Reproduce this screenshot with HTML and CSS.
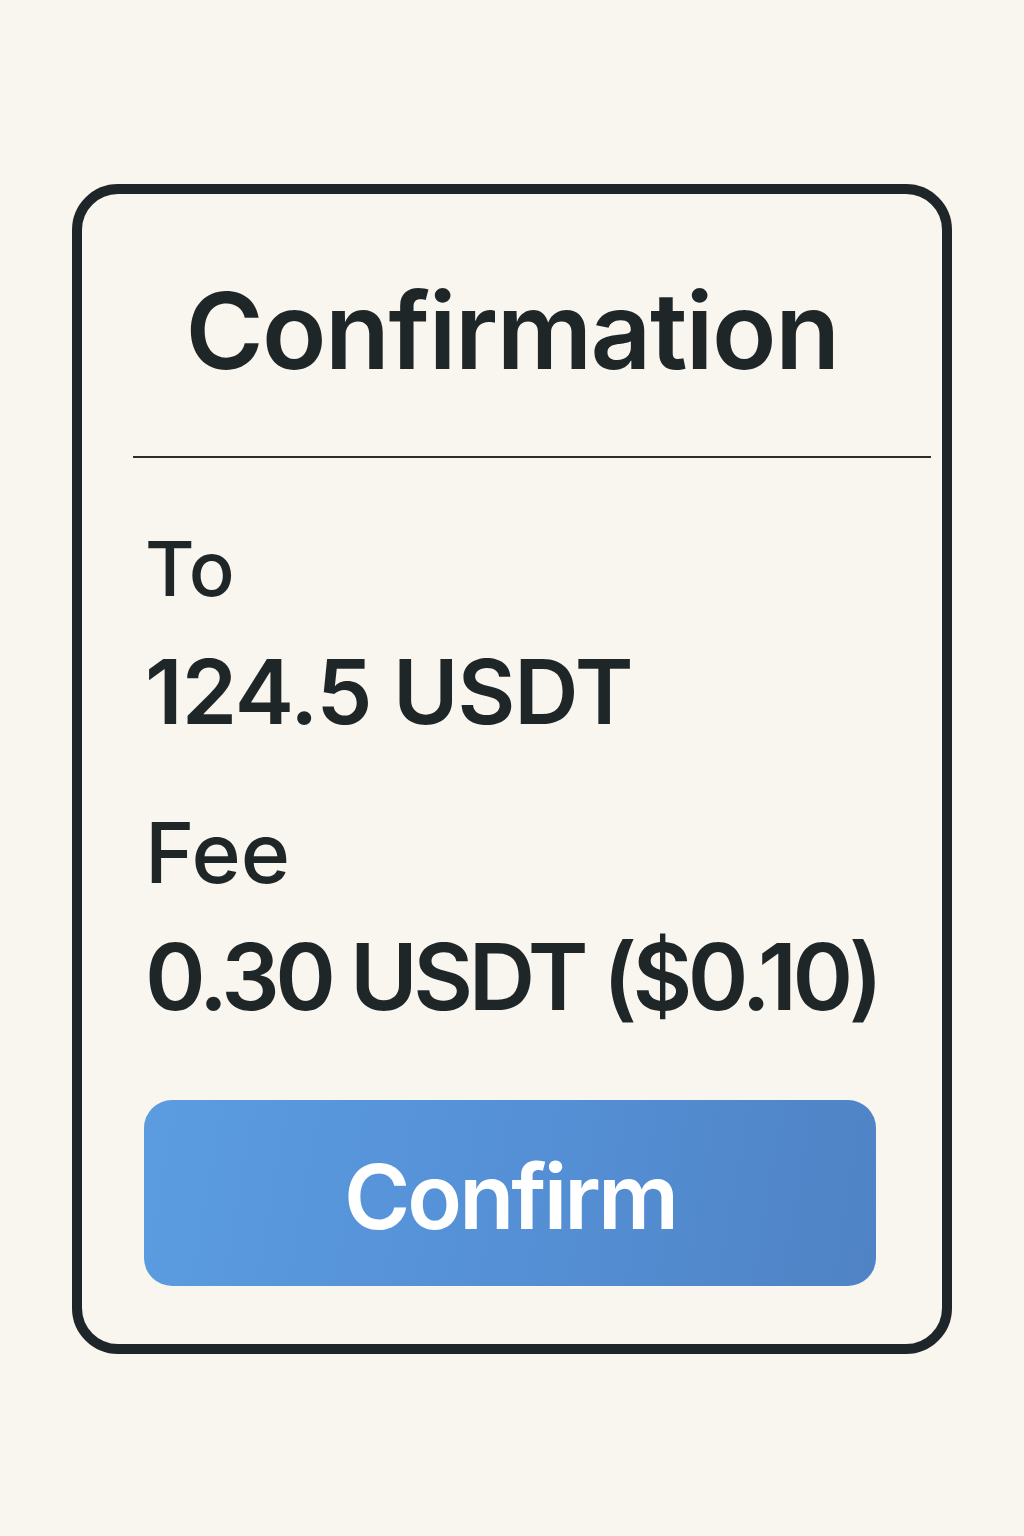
FILE: index.html
```html
<!DOCTYPE html>
<html lang="en">
<head>
    <meta charset="UTF-8">
    <meta name="viewport" content="width=device-width, initial-scale=1.0">
    <title>Confirmation</title>
    <link rel="stylesheet" href="styles.css">
</head>
<body>
    <div class="card">
        <h1 class="title">Confirmation</h1>
        <div class="divider"></div>
        <div class="details">
            <p class="label label-to">To</p>
            <p class="value value-amount">124.5 USDT</p>
            <p class="label label-fee">Fee</p>
            <p class="value value-fee">0.30 USDT ($0.10)</p>
        </div>
        <button class="confirm-btn">Confirm</button>
    </div>
</body>
</html>
```

FILE: styles.css
```css
body {
    margin: 0;
    background-color: #f9f6f0;
    font-family: 'Inter', 'Noto Sans', sans-serif;
    color: #1e2628;
}
.card {
    box-sizing: border-box;
    width: 880px;
    margin: 184px auto 0;
    padding: 84px 0 58px;
    border: 10px solid #1e2629;
    border-radius: 46px;
}
.title {
    margin: 0;
    font-size: 106px;
    line-height: 1;
    font-weight: 600;
    text-align: center;
    letter-spacing: -1.5px;
}
.divider {
    height: 2px;
    margin: 72px 11px 0 51px;
    background-color: #2a2e2c;
}
.details {
    padding-left: 63px;
}
.label, .value {
    margin: 0;
    line-height: 1;
    white-space: nowrap;
}
.label {
    font-weight: 500;
}
.value {
    font-weight: 600;
}
.label-to {
    margin-top: 72px;
    font-size: 76px;
}
.value-amount {
    margin-top: 41px;
    font-size: 89px;
    letter-spacing: -1px;
}
.label-fee {
    margin-top: 75px;
    font-size: 84px;
}
.value-fee {
    margin-top: 36px;
    font-size: 92px;
    letter-spacing: -4.5px;
}
.confirm-btn {
    display: flex;
    align-items: center;
    justify-content: center;
    box-sizing: border-box;
    width: 732px;
    height: 186px;
    margin: 77px 0 0 62px;
    padding: 8px 0 0;
    border: none;
    border-radius: 28px;
    background: linear-gradient(100deg, #5b9ce0 0%, #5590d6 50%, #4f83c5 100%);
    color: #ffffff;
    font-family: 'Inter', 'Noto Sans', sans-serif;
    font-size: 90px;
    font-weight: 600;
    line-height: 1;
    letter-spacing: -3px;
}
```
